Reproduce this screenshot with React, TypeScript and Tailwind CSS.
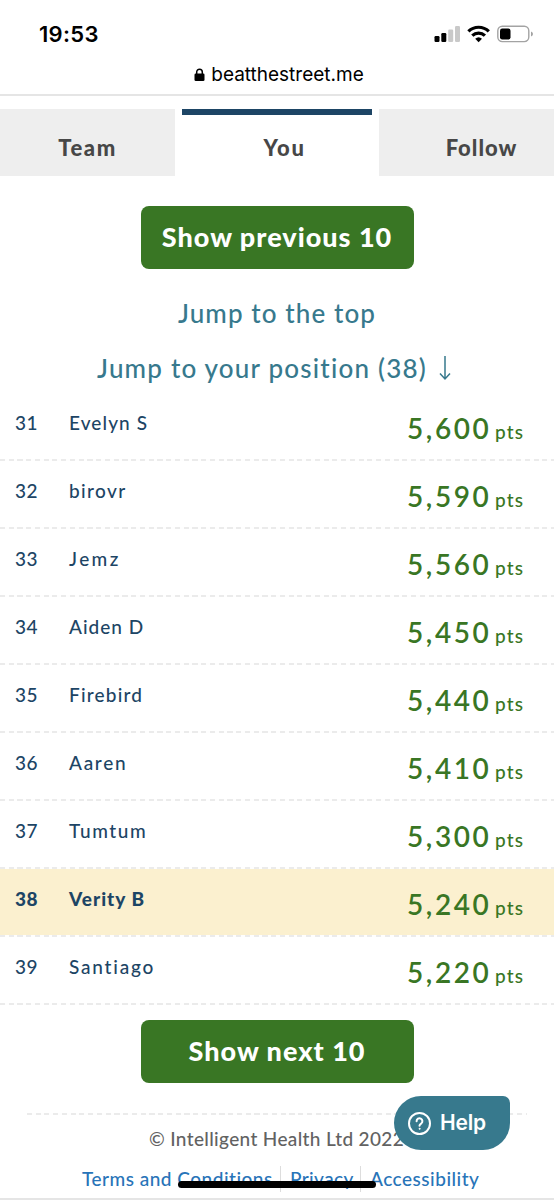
import React from 'react';
import clsx from 'clsx';

interface Player {
  rank: number;
  name: string;
  points: string;
  spacing: string;
}

const CURRENT_RANK = 38;

const PLAYERS: Player[] = [
  { rank: 31, name: 'Evelyn S', points: '5,600', spacing: 'tracking-[1.1px]' },
  { rank: 32, name: 'birovr', points: '5,590', spacing: 'tracking-[1.4px]' },
  { rank: 33, name: 'Jemz', points: '5,560', spacing: 'tracking-[2.4px]' },
  { rank: 34, name: 'Aiden D', points: '5,450', spacing: 'tracking-[1px]' },
  { rank: 35, name: 'Firebird', points: '5,440', spacing: 'tracking-[1.2px]' },
  { rank: 36, name: 'Aaren', points: '5,410', spacing: 'tracking-[1.7px]' },
  { rank: 37, name: 'Tumtum', points: '5,300', spacing: 'tracking-[1.6px]' },
  { rank: 38, name: 'Verity B', points: '5,240', spacing: 'tracking-[1px]' },
  { rank: 39, name: 'Santiago', points: '5,220', spacing: 'tracking-[1.8px]' },
];

const DashedLine: React.FC = () => (
  <div className="h-[2px] w-full bg-[repeating-linear-gradient(90deg,#ebebeb_0_5px,#fefefe_5px_8.75px)]" />
);

const StatusBar: React.FC = () => (
  <div className="flex h-[60px] items-start justify-between pt-[20px] pr-[20px] pl-[39px]">
    <span className="font-[Inter,sans-serif] text-[22px] leading-[28px] font-semibold tracking-[0.3px] text-black">19:53</span>
    <div className="flex items-start pt-[5px]">
      <svg width="27" height="18" viewBox="0 0 27 18">
        <rect x="0.5" y="11" width="5" height="6" rx="1.2" fill="#000" />
        <rect x="7.3" y="8" width="5" height="9" rx="1.2" fill="#000" />
        <rect x="14.2" y="4.5" width="5" height="12.5" rx="1.2" fill="#c9c9c9" />
        <rect x="21" y="1" width="5" height="16" rx="1.2" fill="#c9c9c9" />
      </svg>
      <svg className="ml-[6px]" width="24" height="18" viewBox="0 0 24 18" fill="none" stroke="#000" strokeWidth="3.2">
        <path d="M1.400 6.400a14.600 14.600 0 0 1 20.400 0" />
        <path d="M5.300 10.700a9 9 0 0 1 12.600 0" />
        <path d="M11.600 17.200l-3.400-3.400a5 5 0 0 1 6.800 0z" fill="#000" stroke="none" />
      </svg>
      <svg className="ml-[6px]" width="37" height="18" viewBox="0 0 37 18">
        <rect x="0.800" y="1.200" width="31" height="15.400" rx="4.500" fill="none" stroke="#a3a3a3" strokeWidth="1.400" />
        <rect x="3" y="3.500" width="10.500" height="11" rx="2.200" fill="#000" />
        <path d="M34 6.500q2 .8 2 2.500t-2 2.500z" fill="#a3a3a3" />
      </svg>
    </div>
  </div>
);

const AddressBar: React.FC = () => (
  <div className="flex h-[36px] items-start justify-center gap-[6px] border-b-2 border-[#e5e5e5] pt-[2px] pl-[4px]">
    <svg className="mt-[6px]" width="11" height="14" viewBox="0 0 11 14">
      <path d="M2.700 6V4a2.800 2.800 0 0 1 5.600 0v2" fill="none" stroke="#000" strokeWidth="1.500" />
      <rect x="0.500" y="5.500" width="10" height="7.500" rx="1.300" fill="#000" />
    </svg>
    <span className="font-[Inter,sans-serif] text-[19px] leading-[26px] text-black">beatthestreet.me</span>
  </div>
);

const Tabs: React.FC = () => (
  <nav className="mt-[13px] flex h-[67px] text-[22px] leading-[28px] font-black tracking-[1px] text-[#474747]">
    <div className="w-[175px] bg-[#eeeeee] pt-[25px] text-center tracking-[1.6px]">Team</div>
    <div className="mx-[7px] w-[190px] border-t-[6px] border-[#1d4565] pt-[19px] pl-[15px] text-center tracking-[1.6px]">You</div>
    <div className="flex-1 bg-[#eeeeee] pt-[25px] pl-[30px] text-center">Follow</div>
  </nav>
);

const PageButton: React.FC<{ children: React.ReactNode }> = ({ children }) => (
  <button className="block h-[63px] w-[273px] rounded-[8px] bg-[#397624] text-[27px] font-black tracking-[1px] text-white">
    {children}
  </button>
);

const PlayerRow: React.FC<{ player: Player }> = ({ player }) => {
  const isCurrent = player.rank === CURRENT_RANK;
  return (
    <li className={clsx('h-[68px]', isCurrent && 'bg-[#fbf0cf]')}>
      <div className="flex h-[66px] items-start pl-[15px] text-[#1d4565]">
        <span className={clsx('w-[54px] pt-[17px] text-[19px] leading-[26px] tracking-[0.6px]', isCurrent ? 'font-black' : 'font-medium')}>
          {player.rank}
        </span>
        <span className={clsx('flex-1 pt-[17px] text-[19px] leading-[26px]', player.spacing, isCurrent ? 'font-black' : 'font-medium')}>
          {player.name}
        </span>
        <span className="flex w-[147px] items-baseline pt-[18px] text-[#397624]">
          <span className="w-[88px] text-[28px] leading-[34px] font-semibold tracking-[2.6px]">{player.points}</span>
          <span className="text-[19px] font-medium tracking-[1.1px]">pts</span>
        </span>
      </div>
      <DashedLine />
    </li>
  );
};

const HelpButton: React.FC = () => (
  <button className="absolute top-[1096px] left-[394px] flex h-[54px] w-[116px] items-center rounded-[27px] rounded-tr-[7px] bg-[#37798d] pl-[14px] text-white">
    <svg width="23" height="23" viewBox="0 0 23 23" fill="none" stroke="#fff" strokeWidth="2" strokeLinecap="round">
      <circle cx="11.500" cy="11.500" r="10.500" />
      <path d="M8.600 9.200a2.900 2.900 0 1 1 4.600 2.300c-1.100.8-1.700 1.200-1.700 2.300" />
      <circle cx="11.500" cy="16.800" r="0.500" fill="#fff" strokeWidth="1" />
    </svg>
    <span className="ml-[9px] font-[Inter,sans-serif] text-[21px] leading-[26px] font-semibold tracking-[-0.2px]">Help</span>
  </button>
);

export default function App() {
  return (
    <div className="relative h-[1200px] w-[554px] overflow-hidden bg-white font-[Lato,sans-serif]">
      <StatusBar />
      <AddressBar />
      <Tabs />

      <div className="mt-[30px] flex flex-col items-center">
        <PageButton>Show previous 10</PageButton>
        <a className="mt-[26px] text-[26px] leading-[36px] font-medium tracking-[1.1px] text-[#37798d]">Jump to the top</a>
        <a className="mt-[19px] flex items-center pr-[6px] text-[26px] leading-[36px] font-medium tracking-[1.2px] text-[#37798d]">
          Jump to your position (38)
          <svg className="ml-[12px]" width="12" height="26" viewBox="0 0 12 26" fill="none" stroke="#37798d" strokeWidth="1.500">
            <path d="M6 1v23M1 18.500l5 5.500 5-5.500" />
          </svg>
        </a>
      </div>

      <ul className="mt-[7px]">
        {PLAYERS.map((player) => (
          <PlayerRow key={player.rank} player={player} />
        ))}
      </ul>

      <div className="mt-[15px] flex justify-center">
        <PageButton>Show next 10</PageButton>
      </div>

      <footer className="mx-[27px] mt-[30px] font-medium">
        <DashedLine />
        <p className="mt-[11px] pl-[122px] text-[19px] leading-[26px] tracking-[0.35px] text-[#626262]">
          © Intelligent Health Ltd 2022
        </p>
        <div className="mt-[14px] flex pl-[55px] text-[19px] leading-[26px] text-[#2874b8]">
          <a className="w-[199px] border-r border-[#dddddd] tracking-[0.5px]">Terms and Conditions</a>
          <a className="w-[80px] border-r border-[#dddddd] pl-[9px] tracking-[0.4px]">Privacy</a>
          <a className="pl-[9px] tracking-[0.5px]">Accessibility</a>
        </div>
      </footer>

      <HelpButton />
      <div className="absolute top-[1181px] left-[178px] h-[7px] w-[198px] rounded-full bg-black" />
      <div className="absolute top-[1198px] left-0 h-[2px] w-full bg-[#e5e5e5]" />
    </div>
  );
}
